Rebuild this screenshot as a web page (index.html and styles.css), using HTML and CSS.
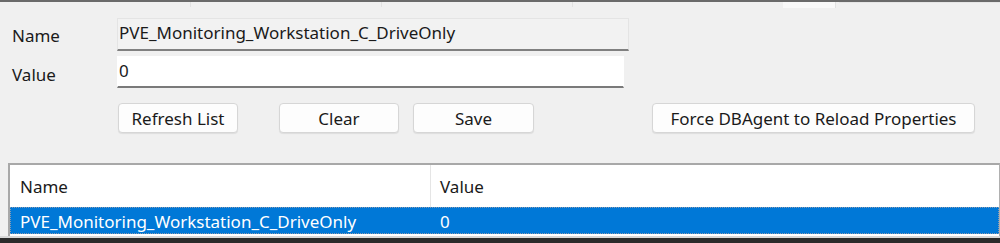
FILE: index.html
```html
<!DOCTYPE html>
<html lang="en">
<head>
    <meta charset="UTF-8">
    <title>Properties</title>
    <link rel="stylesheet" href="styles.css">
</head>
<body>
    <div class="tabs">
        <div class="tab"></div>
        <div class="tab"></div>
        <div class="tab"></div>
        <div class="tab active"></div>
        <div class="tab last"></div>
    </div>

    <div class="form">
        <label class="label">Name</label>
        <div class="field readonly">PVE_Monitoring_Workstation_C_DriveOnly</div>
        <label class="label">Value</label>
        <div class="field value">0</div>
    </div>

    <div class="buttons">
        <button class="btn refresh">Refresh List</button>
        <button class="btn clear">Clear</button>
        <button class="btn save">Save</button>
        <button class="btn force">Force DBAgent to Reload Properties</button>
    </div>

    <div class="list">
        <div class="list-head">
            <div class="col name">Name</div>
            <div class="col val">Value</div>
        </div>
        <div class="list-row selected">
            <div class="col name">PVE_Monitoring_Workstation_C_DriveOnly</div>
            <div class="col val">0</div>
        </div>
    </div>
    <div class="taskbar"></div>
</body>
</html>
```

FILE: styles.css
```css
body { margin: 0; background-color: #f0f0f0; color: #1a1a1a; font-family: "Noto Sans", "Open Sans", sans-serif; font-size: 17px; height: 243px; overflow: hidden; display: flex; flex-direction: column; }

.tabs { display: flex; height: 5px; border-top: 2px solid #6a6a6a; }
.tab { width: 190px; border-right: 1px solid #e2e2e2; }
.tab.active { width: 52px; margin-left: 210px; background-color: #f9f9f9; height: 6px; }
.tab.last { flex: 1; border-right: none; border-top: 1px solid #e6e6e6; margin-left: 3px; }

.form { display: grid; grid-template-columns: 105px auto; grid-template-rows: 33px 32px; row-gap: 5px; align-items: center; padding: 11px 0 0 12px; }
.label { align-self: center; padding-top: 2px; }
.label + .field.value { margin-top: 0; }
.form .label:nth-of-type(2) { padding-top: 4px; }
.field { height: 100%; box-sizing: border-box; padding: 0 1px; display: flex; align-items: center; border: 1px solid #e4e4e4; border-bottom: 2px solid #808080; }
.field.readonly { width: 512px; background-color: #f2f2f2; padding-bottom: 3px; }
.field.value { width: 507px; background-color: #fff; border-color: #fff; border-bottom-color: #7a7a7a; padding-bottom: 2px; }

.buttons { display: flex; padding: 15px 0 0 118px; height: 30px; }
.btn { font: inherit; color: #1a1a1a; background-color: #fdfdfd; border: 1px solid #d6d6d6; border-radius: 4px; box-shadow: 0 1px 1px rgba(0,0,0,0.08); padding: 0; height: 30px; }
.btn.refresh { width: 120px; }
.btn.clear { width: 120px; margin-left: 41px; }
.btn.save { width: 121px; margin-left: 14px; }
.btn.force { width: 323px; margin-left: 118px; }

.list { margin: 30px 0 0 8px; background-color: #fff; border-top: 2px solid #a8a8a8; border-left: 2px solid #a8a8a8; border-right: 1px solid #b0b0b0; height: 73px; box-sizing: border-box; }
.list-head { display: flex; height: 42px; align-items: center; }
.list-head .col { height: 100%; display: flex; align-items: center; padding-top: 1px; box-sizing: border-box; }
.col.name { width: 421px; padding-left: 10px; border-right: 1px solid #e5e5e5; }
.col.val { padding-left: 9px; }
.list-row { display: flex; height: 27px; align-items: center; padding-top: 2px; box-sizing: border-box; }
.list-row .col.name { width: 412px; padding-left: 10px; border-right: none; }
.list-row .col.val { padding-left: 8px; }
.selected { background-color: #0078d7; color: #fff; outline: 1px dotted #8c9bb0; outline-offset: -1px; }

.taskbar { flex: 1; background-color: #2b2b2b; border-top: 2px solid #d8d8d8; }
```
